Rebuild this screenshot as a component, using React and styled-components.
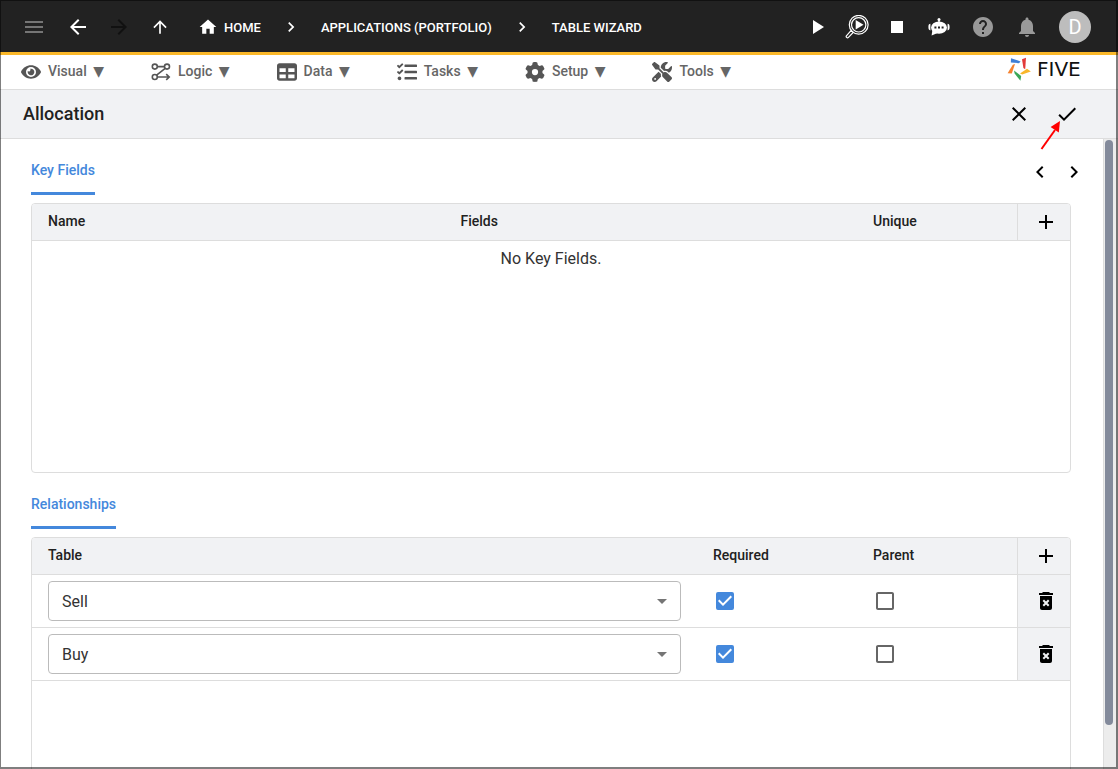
import React, { useState } from 'react'
import styled, { createGlobalStyle } from 'styled-components'
import {
  MdAdd,
  MdArrowBack,
  MdArrowDropDown,
  MdArrowForward,
  MdArrowUpward,
  MdCheck,
  MdCheckBox,
  MdCheckBoxOutlineBlank,
  MdChevronLeft,
  MdChevronRight,
  MdClose,
  MdHelp,
  MdHome,
  MdMenu,
  MdNotifications,
  MdPlayArrow,
  MdStop,
} from 'react-icons/md'
import { FaEye, FaTasks } from 'react-icons/fa'
import { FaGear, FaScrewdriverWrench, FaTable } from 'react-icons/fa6'

const LogicIcon = () => (
  <svg width='20' height='20' viewBox='0 0 20 20' fill='none' stroke='currentColor' strokeWidth='1.6'>
    <circle cx='3.8' cy='4.6' r='2.5' />
    <circle cx='16' cy='4.6' r='2.5' />
    <circle cx='3.8' cy='15' r='2.5' />
    <path d='M6.3 4.6h7.2M14.2 6.4L5.6 13.2M6.3 15h11.4M15.2 12.2l3 2.8-3 2.8' />
  </svg>
)

const InspectIcon = () => (
  <svg width='24' height='24' viewBox='0 0 24 24' fill='none' stroke='currentColor'>
    <circle cx='13.7' cy='9.8' r='9.4' strokeWidth='1.2' />
    <circle cx='13.7' cy='9.8' r='7.2' strokeWidth='1.2' />
    <path d='M6.2 15.4L1.400 20.800c-.8 1 .8 2.600 1.800 1.800L8.200 17.400z' strokeWidth='1.2' />
    <path d='M10.7 5v9.600l7.800-4.800z' fill='currentColor' stroke='none' />
  </svg>
)

const BotIcon = () => (
  <svg width='24' height='24' viewBox='0 0 24 24' fill='currentColor'>
    <circle cx='12' cy='4.6' r='1.5' />
    <path d='M11.3 5h1.400v3h-1.400z' />
    <ellipse cx='12' cy='12.6' rx='8' ry='6.2' />
    <path d='M5.400 15L4.600 20.400 10.600 18z' />
    <path d='M3.400 8.800v6.600C2 15.400 1.400 14.400 1.400 12.100s.6-3.300 2-3.300zM20.600 8.800v6.600c1.400 0 2-1 2-3.300s-.6-3.300-2-3.300z' />
    <path d='M7.400 11.400h2v2h-2zM11 11.400h2v2h-2zM14.600 11.400h2v2h-2z' fill='#222' />
  </svg>
)

const TrashIcon = () => (
  <svg width='24' height='24' viewBox='0 0 24 24' fill='currentColor'>
    <path d='M9 3h6l1 1h3v2H5V4h3z' />
    <path d='M6 7h12v12c0 1.100-.9 2-2 2H8c-1.100 0-2-.9-2-2z' />
    <path d='M9.300 11.300l5.400 5.400M14.700 11.300l-5.400 5.400' stroke='#f1f2f4' strokeWidth='2' />
  </svg>
)

const StarLogo = () => (
  <svg width='24' height='24' viewBox='0 0 24 24'>
    <path d='M4 1.200L13.600 4.400 12 6.200 3.800 5.400z' fill='#3f7fd6' />
    <path d='M15 2.200L19 .8 18.200 12.200 16.400 11z' fill='#e23a3a' />
    <path d='M23.800 14.400L20 11.800 13 16.600 15.200 17.400z' fill='#f8b62b' />
    <path d='M13.400 23.800L14.200 19 7 13.600 7.600 16.400z' fill='#3aa757' />
    <path d='M.6 16.200L4.800 16.600 8 7 5.800 7.800z' fill='#f5822f' />
  </svg>
)

const menus = [
  { label: 'Visual', icon: <FaEye size={20} /> },
  { label: 'Logic', icon: <LogicIcon /> },
  { label: 'Data', icon: <FaTable size={20} /> },
  { label: 'Tasks', icon: <FaTasks size={20} /> },
  { label: 'Setup', icon: <FaGear size={20} /> },
  { label: 'Tools', icon: <FaScrewdriverWrench size={20} /> },
]

const tables = ['Sell', 'Buy']

const Check = ({ label, checked, onChange }) => (
  <CheckLabel $checked={checked}>
    <Checkbox
      aria-label={label}
      checked={checked}
      onChange={(e) => onChange(e.target.checked)}
    />
    {checked ? <MdCheckBox size={24} /> : <MdCheckBoxOutlineBlank size={24} />}
  </CheckLabel>
)

const App = () => {
  const [rows, setRows] = useState([
    { id: 1, table: 'Sell', required: true, parent: false },
    { id: 2, table: 'Buy', required: true, parent: false },
  ])

  const updateRow = (id, change) =>
    setRows(rows.map((row) => (row.id === id ? { ...row, ...change } : row)))

  const addRow = () =>
    setRows([
      ...rows,
      { id: Date.now(), table: 'Sell', required: false, parent: false },
    ])

  return (
    <Page>
      <GlobalStyle />
      <TopBar>
        <IconButton aria-label='Menu' $color='#757575'>
          <MdMenu size={24} />
        </IconButton>
        <NavButtons>
          <IconButton aria-label='Back' $color='#fff'>
            <MdArrowBack size={24} />
          </IconButton>
          <IconButton aria-label='Forward' $color='#111' disabled>
            <MdArrowForward size={24} />
          </IconButton>
          <IconButton aria-label='Up' $color='#fff'>
            <MdArrowUpward size={20} />
          </IconButton>
        </NavButtons>
        <Breadcrumbs>
          <Crumb href='#home'>
            <MdHome size={20} />
            HOME
          </Crumb>
          <MdChevronRight size={20} />
          <Crumb href='#applications'>APPLICATIONS (PORTFOLIO)</Crumb>
          <MdChevronRight size={20} />
          <Crumb href='#wizard'>TABLE WIZARD</Crumb>
        </Breadcrumbs>
        <Actions>
          <ActionGroup $gap='16px'>
            <IconButton aria-label='Run' $color='#fff'>
              <MdPlayArrow size={24} />
            </IconButton>
            <IconButton aria-label='Inspect' $color='#fff'>
              <InspectIcon />
            </IconButton>
            <IconButton aria-label='Stop' $color='#fff'>
              <MdStop size={24} />
            </IconButton>
          </ActionGroup>
          <ActionGroup $gap='20px'>
            <IconButton aria-label='Assistant' $color='#fff'>
              <BotIcon />
            </IconButton>
            <IconButton aria-label='Help' $color='#999'>
              <MdHelp size={24} />
            </IconButton>
            <IconButton aria-label='Notifications' $color='#999'>
              <MdNotifications size={24} />
            </IconButton>
            <Avatar>D</Avatar>
          </ActionGroup>
        </Actions>
      </TopBar>

      <MenuBar>
        {menus.map((menu) => (
          <MenuButton key={menu.label}>
            {menu.icon}
            <MenuText>
              {menu.label} <Caret>▼</Caret>
            </MenuText>
          </MenuButton>
        ))}
        <Brand href='#five'>
          <StarLogo />
          FIVE
        </Brand>
      </MenuBar>

      <TitleBar>
        <Title>Allocation</Title>
        <IconButton aria-label='Cancel' $color='#000'>
          <MdClose size={24} />
        </IconButton>
        <SaveWrap>
          <IconButton aria-label='Save' $color='#000'>
            <MdCheck size={24} />
          </IconButton>
          <Pointer width='24' height='32' viewBox='0 0 24 32'>
            <path d='M1.500 30L15 11' stroke='#f00' strokeWidth='2' />
            <path d='M20 2L18.800 13.400 10.600 8z' fill='#f00' />
          </Pointer>
        </SaveWrap>
      </TitleBar>

      <Body>
        <Content>
          <SectionHead>
            <Tab>Key Fields</Tab>
            <Pager>
              <IconButton aria-label='Previous' $color='#000'>
                <MdChevronLeft size={24} />
              </IconButton>
              <IconButton aria-label='Next' $color='#000'>
                <MdChevronRight size={24} />
              </IconButton>
            </Pager>
          </SectionHead>
          <Panel>
            <Table>
              <thead>
                <tr>
                  <Th>Name</Th>
                  <Th>Fields</Th>
                  <Th $width='160px'>Unique</Th>
                  <ActionTh $width='53px'>
                    <IconButton aria-label='Add key field' $color='#000'>
                      <MdAdd size={24} />
                    </IconButton>
                  </ActionTh>
                </tr>
              </thead>
              <tbody>
                <tr>
                  <EmptyCell colSpan='4'>No Key Fields.</EmptyCell>
                </tr>
              </tbody>
            </Table>
          </Panel>

          <SectionHead>
            <Tab>Relationships</Tab>
          </SectionHead>
          <Panel>
            <Table>
              <thead>
                <tr>
                  <Th>Table</Th>
                  <Th $width='160px'>Required</Th>
                  <Th $width='160px'>Parent</Th>
                  <ActionTh $width='53px'>
                    <IconButton
                      aria-label='Add relationship'
                      $color='#000'
                      onClick={addRow}>
                      <MdAdd size={24} />
                    </IconButton>
                  </ActionTh>
                </tr>
              </thead>
              <tbody>
                {rows.map((row) => (
                  <tr key={row.id}>
                    <Td>
                      <SelectWrap>
                        <Select
                          aria-label='Table'
                          value={row.table}
                          onChange={(e) =>
                            updateRow(row.id, { table: e.target.value })
                          }>
                          {tables.map((name) => (
                            <option key={name}>{name}</option>
                          ))}
                        </Select>
                        <MdArrowDropDown size={24} />
                      </SelectWrap>
                    </Td>
                    <Td>
                      <Check
                        label='Required'
                        checked={row.required}
                        onChange={(required) => updateRow(row.id, { required })}
                      />
                    </Td>
                    <Td>
                      <Check
                        label='Parent'
                        checked={row.parent}
                        onChange={(parent) => updateRow(row.id, { parent })}
                      />
                    </Td>
                    <ActionTd>
                      <IconButton
                        aria-label='Delete'
                        $color='#000'
                        onClick={() =>
                          setRows(rows.filter((r) => r.id !== row.id))
                        }>
                        <TrashIcon />
                      </IconButton>
                    </ActionTd>
                  </tr>
                ))}
              </tbody>
            </Table>
          </Panel>
        </Content>
        <ScrollTrack>
          <ScrollThumb />
        </ScrollTrack>
      </Body>
    </Page>
  )
}

export default App

const GlobalStyle = createGlobalStyle`
  * {
    box-sizing: border-box;
  }
  body {
    margin: 0;
    font-family: Roboto, 'Liberation Sans', sans-serif;
    color: #212121;
    background: #fff;
  }
  button, select {
    font-family: inherit;
  }
`

const Page = styled.div`
  display: flex;
  flex-direction: column;
  height: 100vh;

  /* window outline, drawn over everything */
  &::after {
    content: '';
    position: fixed;
    inset: 0;
    border: solid rgba(0, 0, 0, 0.5);
    border-width: 1px 2px 2px 1px;
    pointer-events: none;
  }
`

const IconButton = styled.button`
  display: flex;
  align-items: center;
  justify-content: center;
  width: 24px;
  height: 24px;
  padding: 0;
  border: 0;
  background: none;
  color: ${(props) => props.$color};
  cursor: pointer;

  svg {
    flex-shrink: 0;
  }
`

const TopBar = styled.header`
  display: flex;
  align-items: center;
  flex-shrink: 0;
  height: 55px;
  padding: 2px 27px 0 22px;
  border-bottom: 3px solid #fbb829;
  background: #222;
`

const NavButtons = styled.div`
  display: flex;
  gap: 17px;
  margin: 0 26px 0 20px;
`

const Breadcrumbs = styled.nav`
  display: flex;
  align-items: center;
  gap: 20px;
  color: #fff;
`

const Crumb = styled.a`
  display: flex;
  align-items: center;
  gap: 6px;
  font-size: 13px;
  font-weight: 500;
  color: #fff;
  text-decoration: none;
  white-space: nowrap;
`

const Actions = styled.div`
  display: flex;
  align-items: center;
  gap: 18px;
  margin-left: auto;
`

const ActionGroup = styled.div`
  display: flex;
  align-items: center;
  gap: ${(props) => props.$gap};
`

const Avatar = styled.button`
  width: 32px;
  height: 32px;
  padding: 0;
  border: 0;
  border-radius: 50%;
  background: #bdbdbd;
  color: #fff;
  font-size: 20px;
`

const MenuBar = styled.nav`
  display: flex;
  align-items: center;
  gap: 47px;
  flex-shrink: 0;
  height: 35px;
  padding: 0 22px 0 21px;
  border-bottom: 1px solid #ddd;
`

const MenuButton = styled.button`
  display: flex;
  align-items: center;
  gap: 7px;
  padding: 0;
  border: 0;
  background: none;
  color: #555;
  font-size: 14px;
  font-weight: 500;
  line-height: 16px;
  white-space: nowrap;
`

const MenuText = styled.span`
  padding-bottom: 2px;
  color: #666;
`

const Caret = styled.span`
  margin-left: 3px;
  font-family: 'DejaVu Sans', sans-serif;
  font-size: 14px;
`

const Brand = styled.a`
  display: flex;
  align-items: center;
  gap: 6px;
  width: 89px;
  margin-left: auto;
  padding-bottom: 6px;
  color: #111;
  font-family: 'DejaVu Sans', sans-serif;
  font-size: 20px;
  line-height: 24px;
  text-decoration: none;
`

const TitleBar = styled.div`
  display: flex;
  align-items: center;
  gap: 24px;
  flex-shrink: 0;
  height: 49px;
  padding: 0 39px 0 23px;
  border-bottom: 1px solid #ddd;
  background: #f1f2f4;
`

const Title = styled.h1`
  flex: 1;
  margin: 0;
  padding-bottom: 2px;
  font-size: 18px;
  font-weight: 500;
`

const SaveWrap = styled.div`
  position: relative;
`

const Pointer = styled.svg`
  position: absolute;
  top: 17px;
  left: -15px;
  fill: none;
  pointer-events: none;
`

const Body = styled.div`
  display: flex;
  flex: 1;
  min-height: 0;
`

const Content = styled.main`
  flex: 1;
  overflow-y: auto;
  padding: 0 32px 8px 31px;
  scrollbar-width: none;
`

const SectionHead = styled.div`
  display: flex;
  align-items: center;
  justify-content: space-between;
  padding: 8px 0;
`

const Tab = styled.button`
  height: 48px;
  padding: 0;
  border: 0;
  border-bottom: 3px solid #4488dc;
  background: none;
  color: #4488dc;
  font-size: 14px;
  font-weight: 500;
`

const Pager = styled.div`
  display: flex;
  gap: 10px;
  margin-right: -15px;
  padding-top: 2px;
`

const Panel = styled.section`
  height: 270px;
  overflow: auto;
  border: 1px solid #ddd;
  border-radius: 4px;
`

const Table = styled.table`
  width: 100%;
  table-layout: fixed;
  border-collapse: separate;
  border-spacing: 0;
`

const Th = styled.th`
  width: ${(props) => props.$width || 'auto'};
  height: 37px;
  padding: 0 16px 2px;
  border-bottom: 1px solid #ddd;
  background: #f1f2f4;
  font-size: 14px;
  font-weight: 500;
  text-align: left;
`

const ActionTh = styled(Th)`
  padding: 0 12px 0 16px;
  border-left: 1px solid #ddd;
`

const Td = styled.td`
  height: 53px;
  padding: 0 16px;
  border-bottom: 1px solid #ddd;
`

const ActionTd = styled(Td)`
  padding: 0 12px 0 16px;
  border-left: 1px solid #ddd;
  background: #f1f2f4;
`

const EmptyCell = styled.td`
  height: 36px;
  padding: 0 0 2px;
  color: #333;
  font-size: 16px;
  text-align: center;
`

const SelectWrap = styled.div`
  display: grid;
  align-items: center;
  color: #757575;

  > * {
    grid-area: 1 / 1;
  }
  svg {
    justify-self: end;
    margin-right: 7px;
    pointer-events: none;
  }
`

const Select = styled.select`
  appearance: none;
  width: 100%;
  height: 40px;
  padding: 0 32px 0 13px;
  border: 1px solid #bbb;
  border-radius: 4px;
  background: #fff;
  color: #333;
  font-size: 16px;
`

const CheckLabel = styled.label`
  display: grid;
  place-items: center;
  width: 24px;
  height: 24px;
  color: ${(props) => (props.$checked ? '#4488dc' : '#666')};

  > * {
    grid-area: 1 / 1;
  }
  svg {
    pointer-events: none;
  }
`

const Checkbox = styled.input.attrs({ type: 'checkbox' })`
  appearance: none;
  width: 16px;
  height: 16px;
  margin: 0;
  background: #fff;
`

const ScrollTrack = styled.div`
  width: 15px;
  padding: 1px 0 0 1px;
  border-left: 1px solid #ddd;
  background: #ececec;
`

const ScrollThumb = styled.div`
  width: 8px;
  height: 93%;
  border-radius: 4px;
  background: #838a9b;
`
